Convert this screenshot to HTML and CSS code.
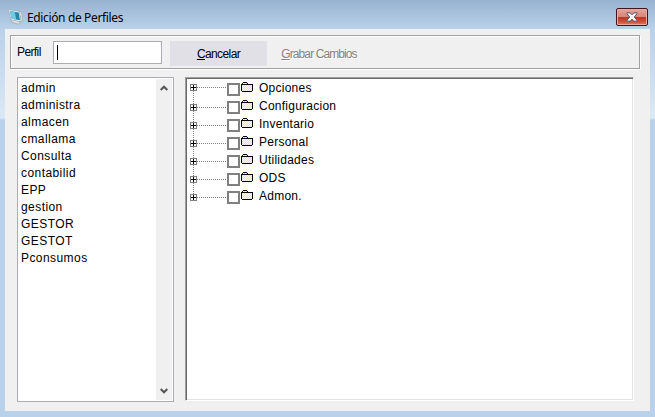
FILE: index.html
```html
<!DOCTYPE html>
<html lang="es">
<head>
<meta charset="utf-8">
<title>Edición de Perfiles</title>
<link rel="stylesheet" href="styles.css">
</head>
<body>
<svg class="defs" width="0" height="0" aria-hidden="true">
  <defs>
    <pattern id="dither" width="2" height="2" patternUnits="userSpaceOnUse">
      <path fill="#fff" d="M0 0h2v2H0z"/><path fill="#ff0" d="M0 0h1v1H0zM1 1h1v1H1z"/>
    </pattern>
    <symbol id="folder" viewBox="0 0 13 11">
      <path fill="url(#dither)" d="M1 3h10v6H1zM2 1h4v2H2z"/>
      <path d="M2 0h4v1H2zM1 1h1v1H1zM6 1h1v1H6zM0 2h12v1H0zM0 3h1v6H0zM11 3h1v6h-1zM1 9h10v1H1z"/>
    </symbol>
    <symbol id="plus" viewBox="0 0 7 7">
      <path fill="#808080" d="M0 0h7v7H0z"/><path fill="#fff" d="M1 1h5v5H1z"/>
      <path d="M3 1h1v5H3zM1 3h5v1H1z"/>
    </symbol>
  </defs>
</svg>
<div class="window">
  <header class="titlebar">
    <svg class="app-icon" width="16" height="16" viewBox="0 0 16 16">
      <path fill="#dfe3e4" stroke="#8b999f" stroke-width=".6" d="M3 10.500l6 1 3.500 1.800-2.300 1.900L3.500 13z"/>
      <path fill="#f4f7f8" stroke="#8fa4ad" stroke-width=".6" d="M.4.600L11.500 2.400l1.800 10.400L3 10.800z"/>
      <path fill="#1f87ad" d="M1.800 2l8.900 1.400 1.300 7.900-8.200-1.500z"/>
      <path fill="#72c8df" d="M1.800 2l5 .8 1.400 7.800-4.400-.8z"/>
      <path fill="#eef1f1" stroke="#8d999d" stroke-width=".5" d="M11.500 2.400l2 .8.900 9.200-1.100.4z"/>
    </svg>
    <h1 class="title">Edición de Perfiles</h1>
    <button class="close" aria-label="Cerrar">
      <svg width="12" height="10" viewBox="0 0 12 10">
        <path fill="#f5f5f5" stroke="#535666" d="M1 .8h3.200L6 2.800 7.800.800H11v1L8.300 5 11 8.200v1H7.800L6 7.200l-1.800 2H1v-1L3.700 5 1 1.800z"/>
      </svg>
    </button>
  </header>
  <main class="client">
    <section class="toolbar">
      <label class="label">Perfil</label>
      <div class="field"><span class="caret"></span></div>
      <button class="btn"><span class="cancel"><u>C</u>ancelar</span></button>
      <button class="btn btn-off"><span class="save"><u>G</u>rabar Cambios</span></button>
    </section>
    <section class="panes">
      <div class="list">
        <ul class="names">
          <li>admin</li><li>administra</li><li>almacen</li><li>cmallama</li><li>Consulta</li><li>contabilid</li><li>EPP</li><li>gestion</li><li>GESTOR</li><li>GESTOT</li><li>Pconsumos</li>
        </ul>
        <div class="scroll">
          <svg width="8" height="6" viewBox="0 0 8 6"><path fill="none" stroke="#555" stroke-width="2" d="M.7 5L4 1.700 7.300 5"/></svg>
          <svg width="8" height="6" viewBox="0 0 8 6"><path fill="none" stroke="#555" stroke-width="2" d="M.7 1L4 4.300 7.300 1"/></svg>
        </div>
      </div>
      <div class="tree-frame">
        <ul class="tree">
          <li class="node first"><svg class="plus"><use href="#plus"/></svg><i class="dots"></i><i class="check"></i><svg class="folder"><use href="#folder"/></svg><span>Opciones</span></li>
          <li class="node"><svg class="plus"><use href="#plus"/></svg><i class="dots"></i><i class="check"></i><svg class="folder"><use href="#folder"/></svg><span>Configuracion</span></li>
          <li class="node"><svg class="plus"><use href="#plus"/></svg><i class="dots"></i><i class="check"></i><svg class="folder"><use href="#folder"/></svg><span>Inventario</span></li>
          <li class="node"><svg class="plus"><use href="#plus"/></svg><i class="dots"></i><i class="check"></i><svg class="folder"><use href="#folder"/></svg><span>Personal</span></li>
          <li class="node"><svg class="plus"><use href="#plus"/></svg><i class="dots"></i><i class="check"></i><svg class="folder"><use href="#folder"/></svg><span>Utilidades</span></li>
          <li class="node"><svg class="plus"><use href="#plus"/></svg><i class="dots"></i><i class="check"></i><svg class="folder"><use href="#folder"/></svg><span>ODS</span></li>
          <li class="node"><svg class="plus"><use href="#plus"/></svg><i class="dots"></i><i class="check"></i><svg class="folder"><use href="#folder"/></svg><span>Admon.</span></li>
        </ul>
      </div>
    </section>
  </main>
</div>
</body>
</html>
```
FILE: styles.css
```css
* { box-sizing: border-box; }
body { margin: 0; font: 12px "Liberation Sans", Arial, sans-serif; color: #000; overflow: hidden; }
ul, h1 { margin: 0; padding: 0; list-style: none; }
button { border: 0; padding: 0; font: inherit; }
svg { display: block; flex: none; }
.defs { position: absolute; }

.window {
  width: 655px; height: 417px; padding: 0 5px 6px; display: flex; flex-direction: column;
  background: linear-gradient(#99b4d1, #b9d1ea 29px, #dce8f5 118px, #b9d1ea 120px);
}
.titlebar { height: 29px; flex: none; display: flex; align-items: flex-start; padding-left: 8px; margin: 0 -5px; background: linear-gradient(#98b3d0, #b9d1ea); }
.app-icon { margin-top: 9px; }
.title { margin: 9px 0 0 3px; font: 12px/17px "Noto Sans", "Open Sans", sans-serif; letter-spacing: -0.36px; }
.close {
  width: 32px; height: 18px; margin: 8px 7px 0 auto; display: grid; place-items: center;
  border: 1px solid #431422; border-radius: 2px; box-shadow: inset 0 0 0 1px #e9aa9f;
  background: linear-gradient(#e6a69c, #d98478 47%, #b93827 50%, #c94a30 75%, #dc8064);
}

.client { flex: 1; background: #f0f0f0; padding: 6px 0 0 5px; }
.toolbar {
  width: 630px; height: 34px; display: flex; align-items: flex-start; padding: 5px 0 0 6px;
  border: 1px solid #a0a0a0; box-shadow: inset 1px 1px #fff, 1px 1px #fff;
}
.label { width: 36px; line-height: 22px; letter-spacing: -0.6px; }
.field { width: 109px; height: 23px; background: #fff; border: 1px solid #abadb3; padding: 3px 0 0 3px; }
.caret { display: block; width: 1px; height: 15px; background: #000; }
.btn { width: 97px; height: 25px; margin-left: 8px; background: #e1e0e6; color: #000; letter-spacing: -0.6px; }
.btn-off { width: 104px; margin-left: 0; background: none; color: #838383; text-shadow: 1px 1px #fff; letter-spacing: -0.9px; }

.panes { display: flex; gap: 11px; padding: 8px 0 0 7px; align-items: flex-start; }
.list { width: 157px; height: 325px; display: flex; background: #fff; border: 1px solid #abadb3; padding: 1px; }
.names { flex: 1; padding: 1px 0 0 2px; line-height: 17px; letter-spacing: 0.43px; }
.scroll { width: 16px; background: #f0f0f0; display: flex; flex-direction: column; justify-content: space-between; align-items: center; padding: 6px 0; }
.tree-frame {
  width: 449px; height: 324px; background: #fff; padding: 3px 0 0 4px;
  border: 1px solid; border-color: #a0a0a0 #fff #fff #a0a0a0;
  box-shadow: inset 1px 1px #696969, inset -1px -1px #e3e3e3;
}
.tree { background: repeating-linear-gradient(#808080 0 1px, transparent 1px 2px) 3px 10px / 1px 108px no-repeat; }
.node { height: 18px; display: flex; align-items: flex-start; line-height: 14px; letter-spacing: 0.25px; }
.plus { width: 7px; height: 7px; margin-top: 5px; }
.first .plus { margin-top: 3px; }
.dots { width: 29px; height: 1px; margin-top: 8px; background: repeating-linear-gradient(90deg, #808080 0 1px, transparent 1px 2px); }
.first .dots { margin-top: 6px; }
.check { width: 13px; height: 13px; margin: 2px 1px 0; border: 2px solid #808080; background: #fff; }
.folder { width: 13px; height: 11px; margin: 1px 5px 0 0; }
```
